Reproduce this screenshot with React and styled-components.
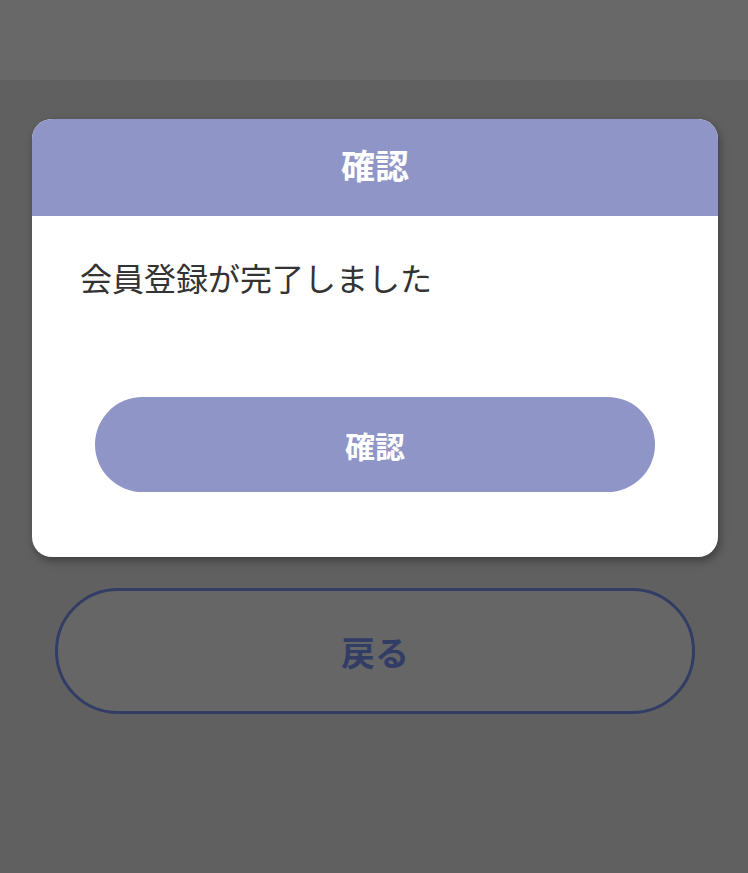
import React from "react";
import styled, { createGlobalStyle } from "styled-components";

const Global = createGlobalStyle`
  html, body { margin: 0; padding: 0; background: #606060; }
  body { font-family: "Noto Sans CJK JP", "Noto Sans", sans-serif; }
  * { box-sizing: border-box; }
`;

const Page = styled.div`
  min-height: 873px;
  background: #606060;
  display: flex;
  flex-direction: column;
`;

const TopBar = styled.div`
  height: 80px;
  background: #686868;
`;

const Content = styled.div`
  display: flex;
  flex-direction: column;
  align-items: center;
  padding: 39px 30px 0 32px;
`;

const Dialog = styled.div`
  width: 686px;
  background: #ffffff;
  border-radius: 20px;
  overflow: hidden;
  box-shadow: 2px 4px 8px rgba(0, 0, 0, 0.35);
`;

const DialogHeader = styled.div`
  height: 97px;
  padding-bottom: 6px;
  background: #8f96c7;
  color: #ffffff;
  font-weight: 700;
  font-size: 34px;
  display: flex;
  align-items: center;
  justify-content: center;
`;

const DialogBody = styled.div`
  padding: 38px 63px 65px 63px;
  display: flex;
  flex-direction: column;
`;

const Message = styled.p`
  margin: 0 0 0 -15px;
  font-size: 32px;
  line-height: 46px;
  color: #333333;
`;

const PrimaryButton = styled.button`
  margin-top: 97px;
  height: 95px;
  width: 560px;
  border: none;
  border-radius: 48px;
  background: #8f96c7;
  color: #ffffff;
  font-family: inherit;
  font-weight: 700;
  font-size: 30px;
  display: flex;
  align-items: center;
  justify-content: center;
`;

const OutlineButton = styled.button`
  margin-top: 31px;
  width: 640px;
  height: 126px;
  border: 3px solid #323d66;
  border-radius: 63px;
  background: #666666;
  color: #323d66;
  font-family: inherit;
  font-weight: 700;
  font-size: 34px;
  display: flex;
  align-items: center;
  justify-content: center;
`;

export default function App() {
  return (
    <>
      <Global />
      <Page>
        <TopBar />
        <Content>
          <Dialog>
            <DialogHeader>確認</DialogHeader>
            <DialogBody>
              <Message>会員登録が完了しました</Message>
              <PrimaryButton>確認</PrimaryButton>
            </DialogBody>
          </Dialog>
          <OutlineButton>戻る</OutlineButton>
        </Content>
      </Page>
    </>
  );
}
